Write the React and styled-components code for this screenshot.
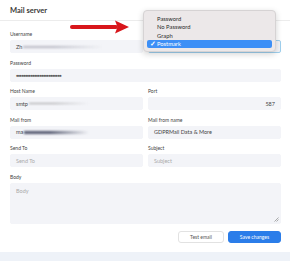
import styled, { createGlobalStyle } from "styled-components";

const Global = createGlobalStyle`
  html, body {
    margin: 0;
    padding: 0;
    background: #eef2f8;
  }
  body {
    font-family: Lato, "Noto Sans", sans-serif;
    color: #333;
  }
`;

const Page = styled.div`
  position: relative;
  width: 290px;
  height: 261px;
  overflow: hidden;
`;

const Card = styled.section`
  background: #fff;
  height: 252px;
  display: flex;
  flex-direction: column;
`;

const Header = styled.div`
  height: 20px;
  border-bottom: 1px solid #ececec;
  display: flex;
  align-items: center;
  padding: 0 10px;
  font-size: 7.5px;
  font-weight: 700;
  color: #3a3a3a;
`;

const Form = styled.div`
  padding: 10px 9px 0 10px;
  display: grid;
  grid-template-columns: 133px 133px;
  column-gap: 5px;
  row-gap: 6.6px;
`;

const Field = styled.div`
  display: flex;
  flex-direction: column;
  grid-column: ${(p) => (p.$wide ? "1 / 3" : "auto")};
`;

const Label = styled.div`
  font-size: 5px;
  line-height: 7px;
  margin-bottom: 2px;
  color: #444;
`;

const Input = styled.div`
  height: ${(p) => p.$h || 13}px;
  box-sizing: border-box;
  background: #f3f4f8;
  border-radius: 2px;
  border: 1px solid ${(p) => (p.$focus ? "#9fd0ee" : "#f3f4f8")};
  display: flex;
  align-items: ${(p) => (p.$top ? "flex-start" : "center")};
  justify-content: ${(p) => (p.$right ? "flex-end" : "flex-start")};
  padding: ${(p) => (p.$top ? "4px 5px" : "0 5px")};
  font-size: 5.5px;
  color: ${(p) => (p.$ph ? "#aaa" : "#444")};
  position: relative;
`;

const Dots = styled.span`
  font-size: 4px;
  letter-spacing: -0.6px;
  color: #555;
`;

const Blur = styled.span`
  display: inline-block;
  height: ${(p) => p.$t || 2}px;
  width: ${(p) => p.$w}px;
  margin-left: 1px;
  background: linear-gradient(90deg, ${(p) => p.$c} 0%, ${(p) => p.$c} 40%, rgba(255,255,255,0) 100%);
  filter: blur(0.8px);
`;

const Grip = styled.svg`
  position: absolute;
  right: 1px;
  bottom: 1px;
`;

const Actions = styled.div`
  display: flex;
  justify-content: flex-end;
  gap: 4px;
  padding: 7px 9px 0 0;
`;

const Button = styled.button`
  height: 12px;
  width: ${(p) => p.$w}px;
  padding: 0;
  border-radius: 3px;
  font-family: inherit;
  font-size: 5px;
  border: 1px solid ${(p) => (p.$primary ? "#2b7de9" : "#e2e2e2")};
  background: ${(p) => (p.$primary ? "#2b7de9" : "#fff")};
  color: ${(p) => (p.$primary ? "#fff" : "#555")};
`;

const Menu = styled.div`
  position: absolute;
  left: 143px;
  top: 10px;
  width: 133px;
  height: 42px;
  box-sizing: border-box;
  padding: 3px;
  background: #ece8e9;
  border: 1px solid #d6d3d4;
  border-radius: 4px;
  box-shadow: 0 2px 6px rgba(0, 0, 0, 0.18);
  display: flex;
  flex-direction: column;
`;

const Item = styled.div`
  height: 9.3px;
  display: flex;
  align-items: center;
  padding-left: 10px;
  position: relative;
  font-size: 5.8px;
  border-radius: 2px;
  background: ${(p) => (p.$on ? "#3d8ff6" : "transparent")};
  color: ${(p) => (p.$on ? "#fff" : "#2a2a2a")};
`;

const Check = styled.span`
  position: absolute;
  left: 2.5px;
  font-size: 6.5px;
  font-weight: 700;
`;

const Arrow = styled.svg`
  position: absolute;
  left: 69px;
  top: 20px;
`;

export default function App() {
  return (
    <Page>
      <Global />
      <Card>
        <Header>Mail server</Header>
        <Form>
          <Field>
            <Label>Username</Label>
            <Input>
              Zh<Blur $w={80} $c="#b9bac4" />
            </Input>
          </Field>
          <Field>
            <Label>&nbsp;</Label>
            <Input $focus />
          </Field>
          <Field $wide>
            <Label>Password</Label>
            <Input>
              <Dots>●●●●●●●●●●●●●●●●●●●●●●●●●</Dots>
            </Input>
          </Field>
          <Field>
            <Label>Host Name</Label>
            <Input>
              smtp<Blur $w={60} $t={1} $c="#999" />
            </Input>
          </Field>
          <Field>
            <Label>Port</Label>
            <Input $right>587</Input>
          </Field>
          <Field>
            <Label>Mail from</Label>
            <Input>
              ma<Blur $w={65} $t={2.5} $c="#555a70" />
            </Input>
          </Field>
          <Field>
            <Label>Mail from name</Label>
            <Input>GDPRMail Data &amp; More</Input>
          </Field>
          <Field>
            <Label>Send To</Label>
            <Input $ph>Send To</Input>
          </Field>
          <Field>
            <Label>Subject</Label>
            <Input $ph>Subject</Input>
          </Field>
          <Field $wide>
            <Label>Body</Label>
            <Input $ph $top $h={41}>
              Body
              <Grip width="5" height="5" viewBox="0 0 5 5">
                <path d="M4.5 0.5 L0.5 4.5 M4.5 2.5 L2.5 4.5" stroke="#777" strokeWidth="0.6" />
              </Grip>
            </Input>
          </Field>
        </Form>
        <Actions>
          <Button $w={46}>Test email</Button>
          <Button $w={53} $primary>
            Save changes
          </Button>
        </Actions>
      </Card>
      <Arrow width="62" height="14" viewBox="0 0 62 14">
        <rect x="1" y="5" width="48" height="4" rx="2" fill="#d8161b" />
        <path d="M46 0.5 L60 7 L46 13.5 L48.5 7 Z" fill="#d8161b" />
      </Arrow>
      <Menu>
        <Item>Password</Item>
        <Item>No Password</Item>
        <Item>Graph</Item>
        <Item $on>
          <Check>✓</Check>Postmark
        </Item>
      </Menu>
    </Page>
  );
}
